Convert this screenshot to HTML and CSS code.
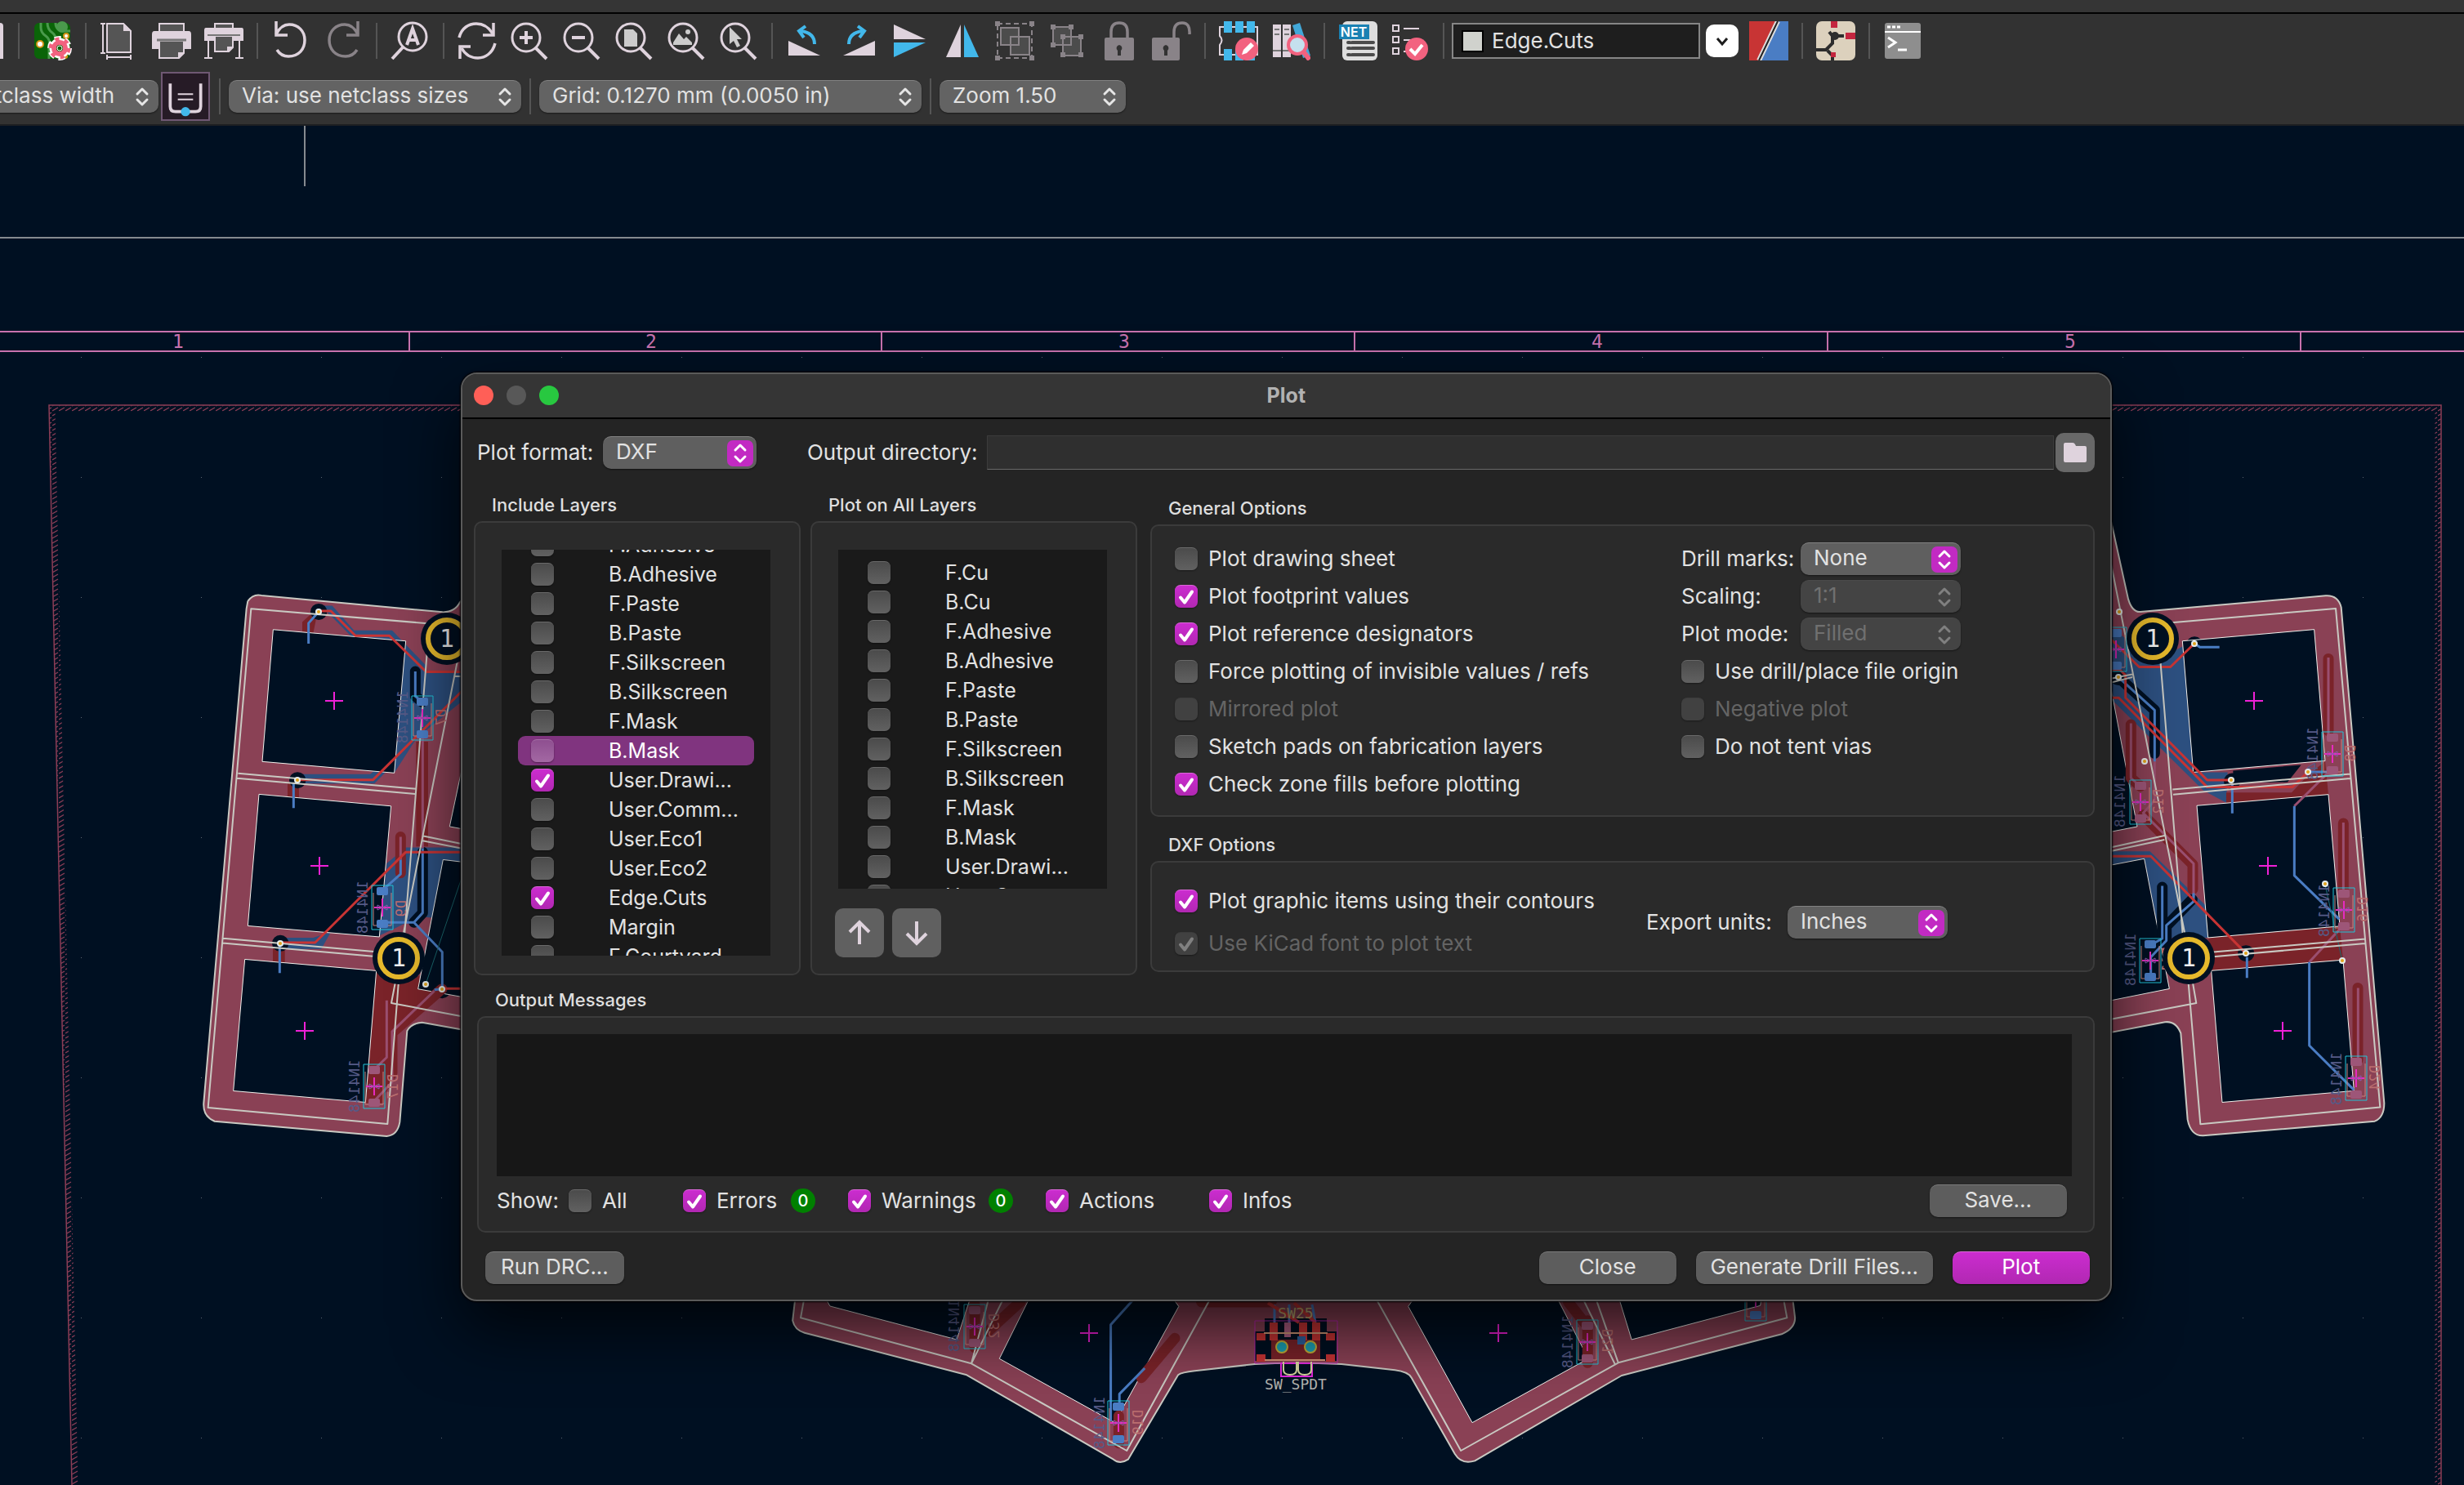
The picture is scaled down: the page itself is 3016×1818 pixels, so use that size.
FILE: index.html
```html
<!DOCTYPE html>
<html lang="en">
<head>
<meta charset="utf-8">
<title>PCB Editor</title>
<link rel="stylesheet" href="styles.css">
</head>
<body>
<header class="toolbars">
  <div class="window-edge"></div>
  <div class="toolbar toolbar-main">
    <span class="clipped-icon"></span>
    <span class="sep"></span>
    <button class="tool" aria-label="Board setup"><svg viewBox="0 0 48 48"><rect x="2" y="2" width="44" height="44" rx="6" fill="#0a6408"/><path d="M10 2v6q0 6 6 10t4 12v16M18 2q0 8 6 12t4 14M28 2q0 10 12 10h6" fill="none" stroke="#4a9a4c" stroke-width="3"/><circle cx="36" cy="7" r="7" fill="#4a9a4c"/><circle cx="9" cy="28" r="4" fill="#fff" stroke="#d59418" stroke-width="2"/><circle cx="41" cy="18" r="3" fill="#fff" stroke="#d59418" stroke-width="2"/><circle cx="40" cy="43" r="3" fill="#d59418"/><circle cx="33" cy="33" r="11" fill="none" stroke="#fff" stroke-width="8" stroke-dasharray="7 4.500"/><circle cx="33" cy="33" r="9" fill="none" stroke="#fff" stroke-width="7"/><circle cx="33" cy="33" r="11" fill="none" stroke="#f2627f" stroke-width="5" stroke-dasharray="5 6.500"/><circle cx="33" cy="33" r="7" fill="none" stroke="#f2627f" stroke-width="6"/><circle cx="33" cy="33" r="3" fill="#0a6408" stroke="#fff"/></svg></button>
    <span class="sep"></span>
    <button class="tool" aria-label="Page settings"><svg viewBox="0 0 48 48"><path d="M9 3h20l9 9v26H9z" fill="#555" stroke="#dfd3dd" stroke-width="2"/><path d="M29 2v10h10z" fill="#dfd3dd"/><path d="M4 3v36M1 3h6M1 39h6M9 44h29M9 41v6M38 41v6" stroke="#dfd3dd" stroke-width="2"/></svg></button>
    <button class="tool" aria-label="Print"><svg viewBox="0 0 48 48"><path d="M9 3h30v12H9z" fill="#555" stroke="#dfd3dd" stroke-width="2"/><path d="M3 12h42q3 0 3 4v18H0V16q0-4 3-4z" fill="#dfd3dd"/><path d="M9 24h30v15l-6 6H9z" fill="#555" stroke="#dfd3dd" stroke-width="2"/><path d="M6 23h36" stroke="#777" stroke-width="3"/><path d="M32 46v-8h8z" fill="#dfd3dd"/></svg></button>
    <button class="tool" aria-label="Plot"><svg viewBox="0 0 48 48"><path d="M13 3h22v8H13z" fill="#555" stroke="#dfd3dd" stroke-width="2"/><path d="M2 8h44q2 0 2 3v13H0V11q0-3 2-3z" fill="#dfd3dd"/><path d="M13 18h22v14l-5 5H13z" fill="#555" stroke="#dfd3dd" stroke-width="2"/><path d="M4 17h40" stroke="#777" stroke-width="2"/><path d="M28 38v-7h8z" fill="#dfd3dd"/><path d="M5 24v21M0 45h10M43 24v21M38 45h10" stroke="#dfd3dd" stroke-width="2"/></svg></button>
    <span class="sep"></span>
    <button class="tool" aria-label="Undo"><svg viewBox="0 0 48 48" fill="none" stroke="#dfd3dd" stroke-width="3.500"><path d="M7 35q5 8 14 8c13 0 20-9 20-20S33 4 22 4C15 4 10 8 6 16"/><path d="M6 0v17h14"/></svg></button>
    <button class="tool dim" aria-label="Redo"><svg viewBox="0 0 48 48" fill="none" stroke="#dfd3dd" stroke-width="3.500"><path d="M41 35q-5 8-14 8C14 43 7 34 7 23S15 4 26 4c7 0 12 4 16 12"/><path d="M42 0v17H28"/></svg></button>
    <span class="sep"></span>
    <button class="tool" aria-label="Find"><svg viewBox="0 0 48 48" fill="none" stroke="#dfd3dd" stroke-width="3"><circle cx="27" cy="19" r="17"/><path d="M15 32L2 46" stroke-width="4"/><path d="M20 29l7-20 7 20M22 23h10" stroke-width="4"/></svg></button>
    <span class="sep"></span>
    <button class="tool" aria-label="Refresh"><svg viewBox="0 0 48 48" fill="none" stroke="#dfd3dd" stroke-width="3.500"><path d="M2 20C5 8 14 3 23 3c9 0 15 4 20 12M46 27c-3 12-12 18-21 18-9 0-16-5-20-12"/><path d="M44 2v15H31M3 46V31h13"/></svg></button>
    <button class="tool" aria-label="Zoom in"><svg viewBox="0 0 48 48" fill="none" stroke="#dfd3dd" stroke-width="3"><circle cx="20" cy="20" r="17"/><path d="M32 33l13 13M12 20h16M20 12v16" stroke-width="4"/></svg></button>
    <button class="tool" aria-label="Zoom out"><svg viewBox="0 0 48 48" fill="none" stroke="#dfd3dd" stroke-width="3"><circle cx="20" cy="20" r="17"/><path d="M32 33l13 13M12 20h16" stroke-width="4"/></svg></button>
    <button class="tool" aria-label="Zoom to page"><svg viewBox="0 0 48 48" fill="none" stroke="#dfd3dd" stroke-width="3"><circle cx="20" cy="20" r="17"/><path d="M32 33l13 13" stroke-width="4"/><path d="M12 10h11l5 5v16H12z" fill="#ccc" stroke="none"/></svg></button>
    <button class="tool" aria-label="Zoom to objects"><svg viewBox="0 0 48 48" fill="none" stroke="#dfd3dd" stroke-width="3"><circle cx="20" cy="20" r="17"/><path d="M32 33l13 13" stroke-width="4"/><path d="M8 26l7-11 6 7 3-3 7 7v3H8z" fill="#ccc" stroke="none"/><circle cx="26" cy="13" r="3" fill="#ccc" stroke="none"/></svg></button>
    <button class="tool" aria-label="Zoom to selection"><svg viewBox="0 0 48 48" fill="none" stroke="#dfd3dd" stroke-width="3"><circle cx="20" cy="20" r="17"/><path d="M32 33l13 13" stroke-width="4"/><path d="M13 7l15 15h-6l4 8-4 2-4-8-5 4z" fill="#ccc" stroke="none"/></svg></button>
    <span class="sep"></span>
    <button class="tool" aria-label="Rotate counterclockwise"><svg viewBox="0 0 48 48"><path d="M3 24v18h39z" fill="#dfd3dd"/><path d="M35 28q0-14-17-16M24 6l-8 6 6 8" fill="none" stroke="#42b8eb" stroke-width="4"/></svg></button>
    <button class="tool" aria-label="Rotate clockwise"><svg viewBox="0 0 48 48"><path d="M45 24v18H6z" fill="#dfd3dd"/><path d="M13 28q0-14 17-16M24 6l8 6-6 8" fill="none" stroke="#42b8eb" stroke-width="4"/></svg></button>
    <button class="tool" aria-label="Flip vertically"><svg viewBox="0 0 48 48"><path d="M4 4v18h39z" fill="#dfd3dd"/><path d="M4 44V26h39z" fill="#42b8eb"/></svg></button>
    <button class="tool" aria-label="Flip horizontally"><svg viewBox="0 0 48 48"><path d="M22 4v40H4z" fill="#dfd3dd"/><path d="M26 4v40h18z" fill="#42b8eb"/></svg></button>
    <button class="tool dim" aria-label="Group"><svg viewBox="0 0 48 48"><path d="M3 3h42v42H3z" fill="none" stroke="#dfd3dd" stroke-width="2" stroke-dasharray="6 4"/><path d="M7 8h22v21H7zM19 19h23v22H19z" fill="#666" stroke="#dfd3dd" stroke-width="2"/><path d="M0 0h6v6H0zM42 0h6v6h-6zM0 42h6v6H0zM42 42h6v6h-6z" fill="#dfd3dd"/></svg></button>
    <button class="tool dim" aria-label="Ungroup"><svg viewBox="0 0 48 48"><path d="M7 7h22v22H7zM19 19h22v23H19z" fill="#666" stroke="#dfd3dd" stroke-width="2"/><path d="M4 4h6v6H4zM26 4h6v6h-6zM4 26h6v6H4zM16 16h6v6h-6zM38 16h6v6h-6zM16 38h6v6h-6zM38 38h6v6h-6z" fill="#dfd3dd"/></svg></button>
    <button class="tool dim" aria-label="Lock"><svg viewBox="0 0 48 48"><path d="M14 22V13q0-11 10-11t10 11v9" fill="none" stroke="#dfd3dd" stroke-width="3.500"/><path fill-rule="evenodd" d="M8 20h32q2 0 2 2v24q0 2-2 2H8q-2 0-2-2V22q0-2 2-2zm16 9a4 4 0 0 0-2 7v6h4v-6a4 4 0 0 0-2-7z" fill="#dfd3dd"/></svg></button>
    <button class="tool dim" aria-label="Unlock"><svg viewBox="0 0 48 48"><path d="M27 22V13q0-11 10-11t9 14" fill="none" stroke="#dfd3dd" stroke-width="3.500"/><path fill-rule="evenodd" d="M2 20h30q2 0 2 2v24q0 2-2 2H2q-2 0-2-2V22q0-2 2-2zm15 9a4 4 0 0 0-2 7v6h4v-6a4 4 0 0 0-2-7z" fill="#dfd3dd"/></svg></button>
    <span class="sep"></span>
    <button class="tool" aria-label="Footprint editor"><svg viewBox="0 0 48 48"><path d="M1 7h46v34H1V29q5-6 0-11z" fill="none" stroke="#dfd3dd" stroke-width="2"/><path d="M6 0h10v14H6zM20 0h10v14H20zM34 0h10v14H34zM6 34h10v14H6zM20 34h10v14H20zM34 34h10v14H34z" fill="#42b8eb"/><circle cx="34" cy="34" r="14" fill="#f2627f"/><path d="M28 41l2-6 9-9 4 4-9 9z" fill="#fff"/></svg></button>
    <button class="tool" aria-label="Footprint libraries"><svg viewBox="0 0 48 48"><path d="M2 4h10v40H2zM14 4h10v40H14z" fill="#dfd3dd"/><path d="M4 10h6M4 16h6M16 10h6M16 16h6M2 36h10M14 36h10" stroke="#777" stroke-width="2"/><path d="M26 5l9-3 13 40-9 3z" fill="#42a8d8"/><path d="M40 38l7 9" stroke="#f2627f" stroke-width="6"/><circle cx="32" cy="29" r="11" fill="#c5e0ee" stroke="#f2627f" stroke-width="4"/></svg></button>
    <span class="sep"></span>
    <button class="tool" aria-label="Load netlist"><svg viewBox="0 0 48 48"><rect x="5" y="0" width="43" height="48" rx="6" fill="#dedede"/><path d="M12 26h2M17 26h26M12 33h2M17 33h26M12 41h2M17 41h26" stroke="#4b4b4b" stroke-width="4" stroke-linecap="round"/><path d="M1 4h37v18H1z" fill="#1a81b3"/><text x="19" y="19" text-anchor="middle" class="net-text">NET</text></svg></button>
    <button class="tool" aria-label="Design rules checker"><svg viewBox="0 0 48 48"><path d="M3 5h7v7H3zM3 19h7v7H3zM3 33h7v7H3z" fill="none" stroke="#dfd3dd" stroke-width="2"/><path d="M16 9h19M16 23h10M16 37h6" stroke="#dfd3dd" stroke-width="2"/><circle cx="32" cy="34" r="14" fill="#f2627f"/><path d="M24 34l6 6 9-11" fill="none" stroke="#fff" stroke-width="4"/></svg></button>
    <span class="sep"></span>
    <div class="layer-box"><span class="swatch"></span><input class="layer-input" type="text" value="Edge.Cuts" aria-label="Active layer"></div>
    <button class="drop" aria-label="Choose layer"><svg viewBox="0 0 40 40"><path d="M14 17l6 7 6-7" fill="none" stroke="#1c1c1c" stroke-width="3"/></svg></button>
    <button class="tool" aria-label="Layer pair"><svg viewBox="0 0 48 48"><path d="M0 0h48v48H0z" fill="#4a7dc4"/><path d="M0 0h36L14 48H0z" fill="#c83434"/><path d="M35 0L12 48" stroke="#ddd" stroke-width="6"/><path d="M35 0L12 48" stroke="#222" stroke-width="2"/></svg></button>
    <span class="sep"></span>
    <button class="tool" aria-label="Router settings"><svg viewBox="0 0 48 48"><rect width="48" height="48" rx="7" fill="#dcd1bd"/><path d="M0 35h12l8-8V18h14M20 18l-4-5M14 36l6 6v6" fill="none" stroke="#2d2d2d" stroke-width="4"/><circle cx="23" cy="18" r="5" fill="#2d2d2d"/><path d="M18 0h8v8h-8zM36 14h12v8H36zM18 38h6v6h-6z" fill="#c4263f"/></svg></button>
    <span class="sep"></span>
    <button class="tool" aria-label="Scripting console"><svg viewBox="0 0 48 48"><rect x="2" y="2" width="44" height="44" rx="3" fill="#8e8e8e"/><path d="M2 13h44" stroke="#fff" stroke-width="2"/><path d="M5 7h4M11 7h4M17 7h4" stroke="#fff" stroke-width="3"/><path d="M6 20l9 6-9 6M18 35h11" fill="none" stroke="#fff" stroke-width="3"/></svg></button>
  </div>
  <div class="toolbar toolbar-settings">
    <select class="pop plain track" aria-label="Track width"><option>Track: use netclass width</option></select>
    <button class="toggle" aria-label="Auto track width"><svg viewBox="0 0 60 60"><path d="M10 13v30q0 7 7 7h26q7 0 7-7V13" fill="none" stroke="#dfd3dd" stroke-width="4"/><path d="M20 27h20M20 34h20" stroke="#dfd3dd" stroke-width="2"/><circle cx="30" cy="50" r="6" fill="#42b8eb"/></svg></button>
    <span class="sep"></span>
    <select class="pop plain via" aria-label="Via size"><option>Via: use netclass sizes</option></select>
    <span class="sep"></span>
    <select class="pop plain grid" aria-label="Grid"><option>Grid: 0.1270 mm (0.0050 in)</option></select>
    <span class="sep"></span>
    <select class="pop plain zoom" aria-label="Zoom"><option>Zoom 1.50</option></select>
  </div>
</header>

<main class="workspace">
  <svg class="board" viewBox="0 154 3016 1664" preserveAspectRatio="xMinYMin slice" aria-label="Board">
    <defs>
      <pattern id="grid-dots" x="26" y="143" width="147" height="147" patternUnits="userSpaceOnUse"><rect x="73" y="0" width="1" height="1" fill="#5b6672"/></pattern>
      <pattern id="hatch" width="8" height="6" patternUnits="userSpaceOnUse"><path d="M0 5l7-4" stroke="#8c3d56" stroke-width="1.300"/></pattern>
      <g id="cross"><path d="M-11 0h22M0-11v22"/></g>
      <g id="hole"><circle r="4" fill="#e6ecec"/><circle r="2" fill="#e2a21b"/></g>
      <g id="mount"><circle r="32" fill="#001022"/><circle r="23" fill="#001022" stroke="#e6b92c" stroke-width="6"/><text y="10" text-anchor="middle" class="mount-text">1</text></g>
      <g id="diode"><path d="M-13-27h26v54h-26z" fill="none" stroke="#21c4d8"/><path d="M-11-18v40h22v-40" fill="none" stroke="#c9857c"/><path d="M-10 0h20M0-11v22" stroke="#e62ac0" stroke-width="2"/><path d="M-6-3v6l6-3zM6-3v6l-6-3z" fill="none" stroke="#8b5bb0"/><rect x="-7" y="-25" width="14" height="10" rx="2"/><rect x="-7" y="15" width="14" height="10" rx="2"/></g>
      <g id="value"><text transform="rotate(90) scale(1 -1)">1N4148</text></g>
    </defs>
    <rect width="3016" height="1818" fill="#001022"/>
    <rect width="3016" height="1818" fill="url(#grid-dots)"/>
    <path d="M373 154v74M0 291h3016" stroke="#858a90" stroke-width="2"/>
    <path d="M0 406h3016M0 430h3016M501 406v24M1079 406v24M1658 406v24M2237 406v24M2816 406v24" stroke="#c872ae" stroke-width="2"/>
    <g class="ruler-text"><text x="218" y="426">1</text><text x="797" y="426">2</text><text x="1376" y="426">3</text><text x="1955" y="426">4</text><text x="2534" y="426">5</text></g>
    <path d="M88 1818L60 496h2928v1322" fill="none" stroke="#8c3d56" stroke-width="1.500"/>
    <path d="M92 1818L64 500h2920v1318" fill="none" stroke="url(#hatch)" stroke-width="7"/>

    <g class="thin" transform="matrix(.33333 0 0 .46556 220 680)">
      <path class="copper" d="M250 120Q270 100 300 105L965 149Q1010 150 1030 122L1100 60V1255L890 1228Q850 1230 835 1250L808 1490Q800 1525 760 1527L128 1488Q85 1475 88 1440L245 140Z"/>
      <path class="blue-zone" d="M828 240L905 310 1060 300V370L870 480 788 572ZM760 810L830 768H1060V960L880 950 733 1000ZM510 132H560L640 197H780L905 290V308L770 220H640L550 155ZM440 575H700L790 520V545L715 600H440ZM380 1005H490L555 990 520 1035H380Z"/>
      <path class="red-zone" d="M868 490H912V765H868ZM722 1095L780 1115 880 1105V1140H935L790 1260 750 1440H684ZM450 200V175L480 155 500 170 490 205ZM396 600H438V640H396ZM342 1030H386V1070H342Z"/>
      <path class="halo-dot" d="M510 148h1M432 591h1M369 1020h1M963 1143h1"/>
      <path class="cut" d="M343 195L830 225 788 572 303 542ZM291 628L776 659 733 1003 250 974ZM239 1062L722 1092 682 1438 197 1408ZM1060 480L991 713 1060 722ZM1060 808L967 800 875 1140 1060 1164Z"/>
      <path class="edge-thin" d="M343 195L830 225 788 572 303 542ZM291 628L776 659 733 1003 250 974ZM239 1062L722 1092 682 1438 197 1408ZM1060 480L991 713 1060 722ZM1060 808L967 800 875 1140 1060 1164Z"/>
      <path class="halo" d="M865 305V370L890 385M892 780V940L860 965"/>
      <path class="halo-red" d="M811 740V835M760 1180V1320L714 1350M963 1140L780 1255V1360L714 1435"/>
      <path class="trace-mix" d="M892 480V770M811 740V800M760 1170V1320L714 1352M935 1145L780 1252V1385L714 1435"/>
      <path class="trace-blue" d="M510 148L473 178V232M418 600V664M367 1025V1098M865 305V370L890 385M892 770V940L860 965 964 1043V1140L935 1142M860 965H745M811 800V838L745 880"/>
      <path class="trace-red" d="M510 146H555L645 211H770L905 306H1060M432 590H710L1060 340M369 1018H497L830 780H1060M963 1139H1060"/>
      <path class="ratsnest" d="M903 1128L1060 795"/>
      <path class="edge" d="M250 120Q270 100 300 105L965 149Q1010 150 1030 122L1100 60M1100 1255L890 1228Q850 1230 835 1250L808 1490Q800 1525 760 1527L128 1488Q85 1475 88 1440L245 140 250 120"/>
      <path class="edge" d="M930 180L262 140 104 1452 763 1495 806 1100M912 220L825 1000M1030 240L820 1000M795 1110L777 1177 1060 1215M214 573L868 614M210 586L865 627M160 1007L730 1043M157 1019L728 1055M1060 318H1010M895 738L1060 762M892 750L1060 774"/>
    </g>
    <g class="thin" transform="matrix(.33333 0 0 .5038 2560 620)">
      <path class="copper" d="M50-30L135 225Q150 258 180 256L860 217Q905 215 917 245L1075 1450Q1075 1485 1040 1494L410 1529Q365 1530 353 1490L328 1280Q310 1250 270 1253L40 1282Z"/>
      <path class="blue-zone" d="M60 290L240 375 335 340 374 646 500 646 495 720 410 690 60 460ZM60 838H215L420 970 428 1048H250L194 856 60 873ZM60 80L78 150V300H60Z"/>
      <path class="red-zone" d="M428 1048L912 1020 924 1102 440 1128ZM495 695H735L800 650 858 620 862 645 870 700 495 721Z"/>
      <path class="halo-dot" d="M378 336h1M516 668h1M567 1086h1M99 415h1"/>
      <path class="cut" d="M334 327L818 299 858 618 374 646ZM387 727L870 700 912 1020 428 1048ZM440 1128L924 1102 964 1420 480 1448ZM60 400L168 778 60 792ZM60 873L194 856 286 1172 60 1202ZM520 642L770 628 720 670 520 672Z"/>
      <path class="edge-thin" d="M334 327L818 299 858 618 374 646ZM387 727L870 700 912 1020 428 1048ZM440 1128L924 1102 964 1420 480 1448ZM60 400L168 778 60 792ZM60 873L194 856 286 1172 60 1202Z"/>
      <path class="halo" d="M99 415L232 495V600M260 925V1060M370 955L275 1020V1060"/>
      <path class="halo-red" d="M870 370V545M925 770V935M978 1170V1345M145 530V660L180 680M190 750L372 870V930"/>
      <path class="trace-mix" d="M870 367V555M925 768V940M979 1170V1350M145 527V660L178 680M232 620V715L190 745 375 868V950M880 640L745 728M915 1025L800 1107"/>
      <path class="trace-blue" d="M378 333L398 342H470M517 675V746M571 1095V1146M99 415L232 495V620M375 940V960L275 1018V1055L218 1095V1140M260 922V1050L220 1065M745 728V897L910 1003M800 1107V1310L964 1418M795 645H880"/>
      <path class="trace-red" d="M60 315L175 390H290L378 333M60 397H105L125 410V465L425 665H513M60 465H100L425 682H738L795 645M60 850H218L567 1086"/>
      <path class="ratsnest" d="M857 917L921 1104"/>
      <path class="edge" d="M50-30L135 225Q150 258 180 256L860 217Q905 215 917 245L1075 1450Q1075 1485 1040 1494L410 1529Q365 1530 353 1490L328 1280Q310 1250 270 1253L40 1282"/>
      <path class="edge" d="M285 283L897 248 1060 1460 400 1501 355 1150M250 350L335 1040M60 100L345 1045M370 1150L385 1207 40 1250M298 688L950 650M300 700L950 661M430 1084L1005 1051M430 1095L1005 1062M60 420L150 408M60 430L150 415M60 830L268 800M60 839L268 810"/>
    </g>
    <g class="thin" transform="matrix(.81633 0 0 .33333 940 1580)">
      <path class="copper" d="M45-60L37 110Q40 145 55 155L298 310 518 620Q528 640 540 620L615 310Q620 300 640 295L730 270Q790 262 860 270L940 292Q960 298 965 320L1030 600Q1040 640 1060 625L1280 312 1520 160Q1540 140 1540 100L1532-60Z"/>
      <path class="cut" d="M80 0L93 57 283 180 315-60ZM410-60L347 250 520 485 616 58 580-60ZM995-60L960 58 1056 485 1230 250 1165-60ZM1265-60L1295 180 1488 55 1495-60Z"/>
      <path class="edge-thin" d="M80 0L93 57 283 180 315-60ZM410-60L347 250 520 485 616 58 580-60ZM995-60L960 58 1056 485 1230 250 1165-60ZM1265-60L1295 180 1488 55 1495-60Z"/>
      <path class="halo-red" d="M610 175L560 320M378 42L330 150M1200 42L1225 120M310 50V210M1229 110V265M526 460V560M650 42H755"/>
      <path class="trace-blue" d="M560 0L514 125V480M565 285L527 380V420"/>
      <path class="edge" d="M45-60L37 110Q40 145 55 155L298 310 518 620Q528 640 540 620L615 310Q620 300 640 295L730 270Q790 262 860 270L940 292Q960 298 965 320L1030 600Q1040 640 1060 625L1280 312 1520 160Q1540 140 1540 100L1532-60"/>
      <path class="edge" d="M55 20L49 100 305 268 538 588 670 0M905 0L1039 588 1275 265 1528 100 1522 20M355 20L305 268M332 20L305 268M1220 20L1270 270M1240 20L1275 265"/>
    </g>

    <g>
      <path d="M1536 1630v36h100v-36h-12v-16h-76v16z" fill="#001022"/>
      <path d="M1556 1640h60v26h-60z" fill="#7a2329"/>
      <path d="M1554 1619h10v22h-10zM1590 1619h10v22h-10zM1606 1619h10v22h-10zM1538 1632h11v9h-11zM1623 1632h11v9h-11zM1538 1658h11v9h-11zM1623 1658h11v9h-11z" fill="#c83434"/>
      <path d="M1572 1619h8v18h-8z" fill="#b06084"/><path d="M1588 1636h10v10h-10z" fill="#2d62a0"/>
      <path d="M1560 1597v22M1578 1597v22M1606 1597l4 22" stroke="#4a7dc4" stroke-width="3"/>
      <path d="M1552 1595l38 24M1584 1595l26 24" stroke="#c83434" stroke-width="4"/>
      <path d="M1536 1617h101v52h-101z" fill="none" stroke="#c026b4"/><path d="M1568 1669h38v16h-38z" fill="none" stroke="#e62ae0" stroke-width="2"/>
      <path d="M1547 1632h78M1548 1665h74" stroke="#d69a78" stroke-width="2"/>
      <path d="M1571 1667v10q0 6 8 6t8-6v-10M1589 1667v10q0 6 8 6t8-6v-10" fill="none" stroke="#d8d8a0" stroke-width="2"/>
      <circle cx="1569" cy="1649" r="7" fill="#1ba0b4" stroke="#c6b13a" stroke-width="2"/><circle cx="1604" cy="1649" r="7" fill="#1ba0b4" stroke="#c6b13a" stroke-width="2"/>
    </g>

    <g fill="#4a7dc4"><use href="#diode" x="517" y="879"/><use href="#diode" x="468" y="1111"/><use href="#diode" x="2632" y="1176"/><use href="#diode" x="2590" y="795"/><use href="#diode" x="1369" y="1742"/><use href="#diode" x="2149" y="1590"/></g>
    <g fill="#9d5678"><use href="#diode" x="458" y="1330"/><use href="#diode" x="2855" y="923"/><use href="#diode" x="2869" y="1114"/><use href="#diode" x="2884" y="1320"/><use href="#diode" x="2620" y="982"/><use href="#diode" x="1193" y="1624"/><use href="#diode" x="1943" y="1643"/></g>
    <g class="value-text"><use href="#value" x="499" y="845"/><use href="#value" x="450" y="1078"/><use href="#value" x="440" y="1297"/><use href="#value" x="2837" y="890"/><use href="#value" x="2851" y="1082"/><use href="#value" x="2866" y="1288"/><use href="#value" x="2601" y="948"/><use href="#value" x="2614" y="1142"/><use href="#value" x="1174" y="1590"/><use href="#value" x="1352" y="1709"/><use href="#value" x="1925" y="1610"/></g>
    <g class="ref-text">
      <text transform="translate(546 868) rotate(90) scale(1 -1)">D7</text><text transform="translate(497 1102) rotate(90) scale(1 -1)">D9</text><text transform="translate(487 1315) rotate(90) scale(1 -1)">D17</text>
      <text transform="translate(2883 912) rotate(90) scale(1 -1)">D8</text><text transform="translate(2898 1098) rotate(90) scale(1 -1)">D16</text><text transform="translate(2913 1304) rotate(90) scale(1 -1)">D24</text>
      <text transform="translate(2648 966) rotate(90) scale(1 -1)">D12</text><text transform="translate(2659 1160) rotate(90) scale(1 -1)">D11</text>
      <text transform="translate(1223 1608) rotate(90) scale(1 -1)">D32</text><text transform="translate(1399 1726) rotate(90) scale(1 -1)">D19</text><text transform="translate(1974 1627) rotate(90) scale(1 -1)">D21</text>
    </g>
    <g class="switch-text"><text x="1586" y="1614" fill="#c9b878">SW25</text><text x="1586" y="1701">SW_SPDT</text></g>
    <g stroke="#f020d8" stroke-width="2"><use href="#cross" x="409" y="858"/><use href="#cross" x="391" y="1060"/><use href="#cross" x="373" y="1262"/><use href="#cross" x="2759" y="858"/><use href="#cross" x="2776" y="1060"/><use href="#cross" x="2794" y="1262"/><use href="#cross" x="1333" y="1632"/><use href="#cross" x="1834" y="1632"/></g>
    <g><use href="#hole" x="390" y="749"/><use href="#hole" x="364" y="955"/><use href="#hole" x="343" y="1155"/><use href="#hole" x="521" y="1205"/><use href="#hole" x="541" y="1211"/><use href="#hole" x="2594" y="749"/><use href="#hole" x="2686" y="788"/><use href="#hole" x="2593" y="829"/><use href="#hole" x="2625" y="932"/><use href="#hole" x="2731" y="955"/><use href="#hole" x="2825" y="945"/><use href="#hole" x="2749" y="1167"/><use href="#hole" x="2846" y="1082"/><use href="#hole" x="2867" y="1176"/></g>
    <g><use href="#mount" x="547" y="782"/><use href="#mount" x="488" y="1173"/><use href="#mount" x="2635" y="782"/><use href="#mount" x="2679" y="1173"/></g>
  </svg>

  <section class="dialog" role="dialog" aria-labelledby="dialog-title">
    <header class="titlebar">
      <div class="lights"><button class="light red" aria-label="Close window"></button><button class="light gray" aria-label="Minimize" disabled></button><button class="light green" aria-label="Zoom window"></button></div>
      <h1 id="dialog-title">Plot</h1>
    </header>
    <div class="content">
      <div class="format-row">
        <label for="format" class="format-label">Plot format:</label>
        <select id="format" class="pop accent format"><option>DXF</option></select>
        <label for="outdir" class="outdir-label">Output directory:</label>
        <input id="outdir" class="outdir" type="text">
        <button class="square folder" aria-label="Browse"><svg viewBox="0 0 48 48"><path d="M10 14q0-2 2-2h9q2 0 3 2l1 2h11q2 0 2 2v16q0 2-2 2H12q-2 0-2-2z" fill="#dfd3dd"/></svg></button>
      </div>
      <div class="columns">
        <section class="group">
          <h2>Include Layers</h2>
          <div class="box list-box">
            <ul class="list list-scrolled">
              <li><label><input type="checkbox">F.Adhesive</label></li>
              <li><label><input type="checkbox">B.Adhesive</label></li>
              <li><label><input type="checkbox">F.Paste</label></li>
              <li><label><input type="checkbox">B.Paste</label></li>
              <li><label><input type="checkbox">F.Silkscreen</label></li>
              <li><label><input type="checkbox">B.Silkscreen</label></li>
              <li><label><input type="checkbox">F.Mask</label></li>
              <li class="selected"><label><input type="checkbox">B.Mask</label></li>
              <li><label><input type="checkbox" checked>User.Drawi...</label></li>
              <li><label><input type="checkbox">User.Comm...</label></li>
              <li><label><input type="checkbox">User.Eco1</label></li>
              <li><label><input type="checkbox">User.Eco2</label></li>
              <li><label><input type="checkbox" checked>Edge.Cuts</label></li>
              <li><label><input type="checkbox">Margin</label></li>
              <li><label><input type="checkbox">F.Courtyard</label></li>
            </ul>
          </div>
        </section>
        <section class="group">
          <h2>Plot on All Layers</h2>
          <div class="box list-box">
            <ul class="list">
              <li><label><input type="checkbox">F.Cu</label></li>
              <li><label><input type="checkbox">B.Cu</label></li>
              <li><label><input type="checkbox">F.Adhesive</label></li>
              <li><label><input type="checkbox">B.Adhesive</label></li>
              <li><label><input type="checkbox">F.Paste</label></li>
              <li><label><input type="checkbox">B.Paste</label></li>
              <li><label><input type="checkbox">F.Silkscreen</label></li>
              <li><label><input type="checkbox">B.Silkscreen</label></li>
              <li><label><input type="checkbox">F.Mask</label></li>
              <li><label><input type="checkbox">B.Mask</label></li>
              <li><label><input type="checkbox">User.Drawi...</label></li>
              <li><label><input type="checkbox">User.Comm...</label></li>
            </ul>
            <div class="arrows">
              <button class="square" aria-label="Move up"><svg viewBox="0 0 60 60"><path d="M30 44V17M18 29l12-12 12 12" fill="none" stroke="#dfd3dd" stroke-width="4"/></svg></button>
              <button class="square" aria-label="Move down"><svg viewBox="0 0 60 60"><path d="M30 16v27M18 31l12 12 12-12" fill="none" stroke="#dfd3dd" stroke-width="4"/></svg></button>
            </div>
          </div>
        </section>
        <div class="options">
          <section class="group">
            <h2>General Options</h2>
            <div class="box general">
              <div class="checks">
                <label><input type="checkbox">Plot drawing sheet</label>
                <label><input type="checkbox" checked>Plot footprint values</label>
                <label><input type="checkbox" checked>Plot reference designators</label>
                <label><input type="checkbox">Force plotting of invisible values / refs</label>
                <label class="off"><input type="checkbox" disabled>Mirrored plot</label>
                <label><input type="checkbox">Sketch pads on fabrication layers</label>
                <label><input type="checkbox" checked>Check zone fills before plotting</label>
              </div>
              <div class="checks">
                <div class="field"><label for="drill">Drill marks:</label><select id="drill" class="pop accent"><option>None</option></select></div>
                <div class="field"><label for="scale">Scaling:</label><select id="scale" class="pop" disabled><option>1:1</option></select></div>
                <div class="field"><label for="mode">Plot mode:</label><select id="mode" class="pop" disabled><option>Filled</option></select></div>
                <label><input type="checkbox">Use drill/place file origin</label>
                <label class="off"><input type="checkbox" disabled>Negative plot</label>
                <label><input type="checkbox">Do not tent vias</label>
              </div>
            </div>
          </section>
          <section class="group">
            <h2>DXF Options</h2>
            <div class="box dxf">
              <div class="checks">
                <label><input type="checkbox" checked>Plot graphic items using their contours</label>
                <label class="off"><input type="checkbox" checked disabled>Use KiCad font to plot text</label>
              </div>
              <div class="units"><label for="units">Export units:</label><select id="units" class="pop accent"><option>Inches</option></select></div>
            </div>
          </section>
        </div>
      </div>
      <section class="group messages">
        <h2>Output Messages</h2>
        <div class="box">
          <textarea aria-label="Output messages" readonly></textarea>
          <div class="show-row">
            <span class="show">Show:</span>
            <label class="all"><input type="checkbox">All</label>
            <label class="errors"><input type="checkbox" checked>Errors</label><span class="badge">0</span>
            <label class="warnings"><input type="checkbox" checked>Warnings</label><span class="badge">0</span>
            <label class="actions"><input type="checkbox" checked>Actions</label>
            <label><input type="checkbox" checked>Infos</label>
            <button class="btn save">Save...</button>
          </div>
        </div>
      </section>
      <footer class="footer">
        <button class="btn drc">Run DRC...</button>
        <button class="btn">Close</button>
        <button class="btn drillfiles">Generate Drill Files...</button>
        <button class="btn primary">Plot</button>
      </footer>
    </div>
  </section>
</main>
</body>
</html>
```
FILE: styles.css
```css
* { box-sizing: border-box; }

body {
  margin: 0;
  height: 100vh;
  display: flex;
  flex-direction: column;
  overflow: hidden;
  background: #001022;
  color: #e2e2e2;
  font: 26px/32px Inter, "Liberation Sans", sans-serif;
}

button, select, input, textarea { font: inherit; color: inherit; margin: 0; }
button { padding: 0; border: 0; background: none; }
svg { display: block; }

/* Toolbars */
.toolbars { flex: none; background: #323232; border-bottom: 2px solid #1d1f22; overflow: hidden; }
.window-edge { height: 17px; background: #353535; border-bottom: 2px solid #000; }
.toolbar { display: flex; align-items: center; }
.toolbar-main { height: 66px; }
.toolbar-settings { height: 69px; }
.clipped-icon { width: 4px; height: 44px; margin-right: 10px; background: #dfd3dd; border-radius: 0 4px 0 0; }
.sep { flex: none; width: 18px; height: 44px; background: linear-gradient(#555, #555) center / 2px 100% no-repeat; }
.tool { flex: none; width: 64px; height: 64px; display: grid; place-items: center; }
.tool svg { width: 48px; height: 48px; }
.dim { opacity: .5; }
.net-text { font: 600 16px Inter, sans-serif; fill: #fff; }
.layer-box {
  display: flex;
  align-items: center;
  gap: 10px;
  width: 304px;
  height: 44px;
  padding: 0 10px;
  margin: 0 7px 0 1px;
  background: #1e1e1e;
  border: 2px solid #868686;
}
.swatch { flex: none; width: 27px; height: 27px; background: #d0d2cd; border: 2px solid #000; }
.layer-input { width: 100%; padding: 0; border: 0; background: none; }
.drop { width: 40px; height: 40px; margin-right: 5px; border-radius: 10px; background: #fff; }
.toggle { flex: none; width: 60px; height: 60px; margin: 0 3px; background: #261b26; border: 2px solid #6f5873; }
.toggle svg { width: 56px; height: 56px; }

/* Pop-up menus */
.pop {
  appearance: none;
  height: 40px;
  padding: 0 50px 4px 16px;
  border: 0;
  border-top: 1px solid #828282;
  border-radius: 10px;
  box-shadow: 0 1px 2px rgba(0, 0, 0, .5);
  background: url("data:image/svg+xml,%3Csvg xmlns='http://www.w3.org/2000/svg' width='32' height='32'%3E%3Cpath d='M10 13l6-6 6 6M10 20l6 6 6-6' fill='none' stroke='%23e6e6e6' stroke-width='3' stroke-linecap='round' stroke-linejoin='round'/%3E%3C/svg%3E") right 4px center no-repeat #636363;
}
.accent {
  background-image: url("data:image/svg+xml,%3Csvg xmlns='http://www.w3.org/2000/svg' width='32' height='32'%3E%3Crect width='32' height='32' rx='7' fill='%23c22ac3'/%3E%3Cpath d='M10 12l6-6 6 6M10 20l6 6 6-6' fill='none' stroke='%23fff' stroke-width='3' stroke-linecap='round' stroke-linejoin='round'/%3E%3C/svg%3E");
  background-color: #5f5f5f;
}
.pop:disabled { opacity: 1; color: #707070; background-color: #444; border-top-color: #4a4a4a; background-image: url("data:image/svg+xml,%3Csvg xmlns='http://www.w3.org/2000/svg' width='32' height='32'%3E%3Cpath d='M10 12l6-6 6 6M10 20l6 6 6-6' fill='none' stroke='%23808080' stroke-width='3' stroke-linecap='round' stroke-linejoin='round'/%3E%3C/svg%3E"); }
.plain { flex: none; padding-bottom: 3px; }
.track { width: 376px; margin-left: -182px; padding-left: 10px; }
.via { width: 358px; margin: 0 2px; }
.grid { width: 468px; margin: 0 2px; }
.zoom { width: 228px; margin: 0 2px; }

/* Workspace */
.workspace { position: relative; flex: 1; min-height: 0; overflow: hidden; }
.board { width: 100%; height: 100%; }
.board text { font-family: "DejaVu Sans Mono", monospace; }
.ruler-text text { font-size: 23px; fill: #c872ae; text-anchor: middle; }
.mount-text { font-size: 30px; fill: #f0f0f0; }
.value-text { font-size: 18px; fill: #565a86; }
.ref-text { font-size: 17px; fill: #bb6f70; }
.switch-text { font-size: 18px; fill: #b5b5b0; text-anchor: middle; }
.thin path { vector-effect: non-scaling-stroke; fill: none; stroke-linejoin: round; }
.thin .copper { fill: #8a4155; }
.thin .blue-zone { fill: #2d5080; }
.thin .red-zone { fill: #7a2329; }
.thin .cut { fill: #001022; }
.edge { stroke: #c9c9c2; stroke-width: 2px; }
.edge-thin { stroke: #f0f0ec; stroke-width: 1px; }
.halo { stroke: #001022; stroke-width: 13px; stroke-linecap: round; }
.halo-dot { stroke: #001022; stroke-width: 20px; stroke-linecap: round; }
.halo-red { stroke: #7a2329; stroke-width: 13px; stroke-linecap: round; }
.trace-mix { stroke: #9a4f70; stroke-width: 3px; }
.trace-blue { stroke: #4a7dc4; stroke-width: 3px; }
.trace-red { stroke: #c83434; stroke-width: 3px; }
.ratsnest { stroke: #1b6a70; stroke-width: 1px; }

/* Dialog */
.dialog {
  position: absolute;
  top: 302px;
  left: 18.7%;
  width: 67%;
  border: 2px solid #5a5a5a;
  border-radius: 20px;
  background: #242424;
  box-shadow: 0 0 2px 1px #000, 0 36px 80px rgba(0, 0, 0, .7);
  overflow: hidden;
}
.titlebar { display: grid; grid-template-columns: 1fr auto 1fr; align-items: center; height: 55px; padding: 0 14px 2px; background: #353535; border-bottom: 2px solid #000; }
.titlebar h1 { margin: 0; font: 700 25px/32px Inter, sans-serif; color: #b2b2b2; }
.lights { display: flex; gap: 16px; }
.light { width: 24px; height: 24px; border-radius: 50%; }
.red { background: #ff5f57; }
.gray { background: #585858; }
.green { background: #28c840; }
.content { padding: 17px 19px 19px 14px; }

.format-row { display: flex; align-items: center; padding-left: 4px; }
.format-label { width: 154px; }
.format { width: 188px; margin-right: 62px; }
.outdir-label { width: 220px; }
.outdir { flex: 1; min-width: 0; height: 42px; margin-right: 2px; padding: 0 8px; border: 1px solid #3c3c3c; border-bottom-color: #686868; background: #2f2f2f; }
.square { width: 60px; height: 60px; border-radius: 10px; background: #606060; }
.folder { width: 48px; height: 48px; background: #686868; }

.columns { display: grid; grid-template-columns: 400px 400px 1fr; column-gap: 12px; margin-top: 28px; }
.group { display: flex; flex-direction: column; gap: 8px; }
.group h2 { margin: 0; padding-left: 22px; font: 500 22px/24px Inter, sans-serif; color: #dedede; }
.box { border: 2px solid #3b3b3b; border-radius: 10px; background: #2a2a2a; }
.list-box { height: 556px; display: flex; flex-direction: column; gap: 24px; padding: 33px 35px 22px 32px; }
.list { flex: 1; min-height: 0; margin: 0; padding: 10px 20px 0; list-style: none; overflow: hidden; background: #1a1a1a; font-size: 25px; }
.list-scrolled { padding-top: 0; }
.list-scrolled li:first-child { margin-top: -24px; }
.list li { height: 36px; border-radius: 9px; }
.list label { gap: 67px; padding-left: 16px; height: 36px; }
.selected { background: #80347f; color: #fff; }
.arrows { display: flex; gap: 10px; height: 58px; margin-left: -4px; }
.arrows .square { height: 60px; }

.options { display: flex; flex-direction: column; gap: 22px; padding: 4px 0 0 4px; }
label:has(input) { display: flex; align-items: center; gap: 13px; }
input[type="checkbox"] {
  appearance: none;
  flex: none;
  width: 28px;
  height: 28px;
  border-radius: 7px;
  border-top: 1px solid #6a6a6a;
  background: linear-gradient(#4b4b4b, #616161);
  box-shadow: 0 1px 2px rgba(0, 0, 0, .4);
}
input[type="checkbox"]:checked {
  border-top-color: #d968d6;
  background: url("data:image/svg+xml,%3Csvg xmlns='http://www.w3.org/2000/svg' viewBox='0 0 28 28'%3E%3Cpath d='M7 15l5 6 9-13' fill='none' stroke='%23fff' stroke-width='4' stroke-linecap='round' stroke-linejoin='round'/%3E%3C/svg%3E") center / 28px 28px no-repeat, linear-gradient(#cb2ccf, #b128b2);
}
input[type="checkbox"]:disabled { border-top-color: #3c3c3c; background: #414141; }
input[type="checkbox"]:checked:disabled {
  background: url("data:image/svg+xml,%3Csvg xmlns='http://www.w3.org/2000/svg' viewBox='0 0 28 28'%3E%3Cpath d='M7 15l5 6 9-13' fill='none' stroke='%23808080' stroke-width='4' stroke-linecap='round' stroke-linejoin='round'/%3E%3C/svg%3E") center / 28px 28px no-repeat #414141;
}
.selected input[type="checkbox"] { border-top-color: #a671a6; background: linear-gradient(#8e4f90, #a368a3); }
.off { color: #646464; }

.general { display: grid; grid-template-columns: 620px 1fr; height: 358px; padding: 17px 28px; }
.checks > * { height: 46px; }
.field { display: grid; grid-template-columns: 146px 196px; align-items: center; }
.field .pop, .units .pop { width: 196px; }
.dxf { display: grid; grid-template-columns: 577px 1fr; align-items: center; height: 136px; padding: 14px 28px 0; }
.dxf .checks > * { height: 52px; }
.units { display: grid; grid-template-columns: 173px 196px; align-items: center; }

.messages { margin: 18px -1px 0 4px; }
.messages .box { padding: 20px 26px 17px 22px; margin-right: 1px; }
textarea { display: block; width: 100%; height: 174px; padding: 8px; border: 0; resize: none; background: #171717; }
.show-row { display: flex; align-items: center; margin-top: 10px; }
.show { width: 88px; }
.all { width: 140px; }
.errors { width: 132px; }
.warnings { width: 172px; }
.badge { display: grid; place-items: center; width: 30px; height: 30px; margin-right: 40px; border-radius: 50%; background: #008000; color: #fff; font: 500 20px/24px Inter, sans-serif; }
.errors, .warnings { flex: none; }
.actions { width: 200px; }
.btn { width: 168px; height: 40px; padding-bottom: 3px; border-top: 1px solid #7a7a7a; border-radius: 10px; background: #5d5d5d; box-shadow: 0 1px 2px rgba(0, 0, 0, .5); }
.save { margin: 0 6px 0 auto; }
.footer { display: flex; gap: 24px; margin-top: 23px; padding: 0 6px 0 14px; }
.drc { width: 170px; margin-right: auto; }
.drillfiles { width: 290px; }
.primary { border-top-color: #d968d6; background: linear-gradient(#cb2ccf, #b128b2); color: #fff; }
```
